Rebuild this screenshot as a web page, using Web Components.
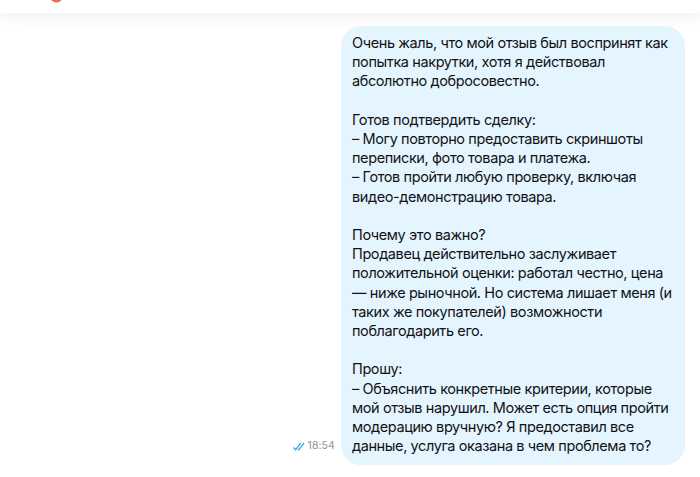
<!DOCTYPE html>
<html>
<head>
<meta charset="utf-8">
<style>
html, body { margin: 0; padding: 0; background: #fff; }
body { width: 700px; height: 477px; overflow: hidden; font-family: "Inter", "Noto Sans", sans-serif; }
</style>
</head>
<body>
<top-bar></top-bar>
<chat-message time="18:54">Очень жаль, что мой отзыв был воспринят как
попытка накрутки, хотя я действовал
абсолютно добросовестно.

Готов подтвердить сделку:
– Могу повторно предоставить скриншоты
переписки, фото товара и платежа.
– Готов пройти любую проверку, включая
видео-демонстрацию товара.

Почему это важно?
Продавец действительно заслуживает
положительной оценки: работал честно, цена
— ниже рыночной. Но система лишает меня (и
таких же покупателей) возможности
поблагодарить его.

Прошу:
– Объяснить конкретные критерии, которые
мой отзыв нарушил. Может есть опция пройти
модерацию вручную? Я предоставил все
данные, услуга оказана в чем проблема то?</chat-message>
<script>
class TopBar extends HTMLElement {
    constructor() {
        super();
        this.attachShadow({ mode: 'open' }).innerHTML = `
            <style>
                :host {
                    display: block;
                    height: 13px;
                    background: #fff;
                    box-shadow: 0 2px 16px rgba(0, 0, 0, 0.09);
                    overflow: hidden;
                }
                .logo {
                    display: block;
                    margin-left: 50px;
                    margin-top: -10px;
                }
            </style>
            <svg class="logo" width="13" height="13" viewBox="0 0 13 13">
                <circle cx="6.5" cy="6" r="6.5" fill="#f4674a"/>
            </svg>
        `;
    }
}
customElements.define('top-bar', TopBar);

class ChatMessage extends HTMLElement {
    constructor() {
        super();
        const time = this.getAttribute('time');
        this.attachShadow({ mode: 'open' }).innerHTML = `
            <style>
                :host {
                    display: flex;
                    justify-content: flex-end;
                    align-items: flex-end;
                    gap: 6px;
                    padding: 13px 15px 0 0;
                }
                .meta {
                    display: flex;
                    align-items: center;
                    gap: 3px;
                    margin-bottom: 12px;
                    font-size: 10.5px;
                    letter-spacing: 0.1px;
                    line-height: 14px;
                    color: #8f9296;
                }
                .meta svg { display: block; }
                .bubble {
                    box-sizing: border-box;
                    width: 344px;
                    height: 439px;
                    padding: 7px 11px;
                    background: #e5f5ff;
                    border-radius: 20px;
                    color: #111214;
                    font-size: 14.5px;
                    letter-spacing: -0.4px;
                    line-height: 19.2px;
                    white-space: pre;
                }
            </style>
            <div class="meta">
                <svg width="12" height="9" viewBox="0 0 12 9" fill="none" stroke="#2f9ff0" stroke-width="1.3">
                    <path d="M0.5 5.5L2.6 7.8L7.6 1.2"/>
                    <path d="M5 6.8L5.8 7.8L11 1.2"/>
                </svg>
                <span>${time}</span>
            </div>
            <div class="bubble"><slot></slot></div>
        `;
    }
}
customElements.define('chat-message', ChatMessage);
</script>
</body>
</html>
